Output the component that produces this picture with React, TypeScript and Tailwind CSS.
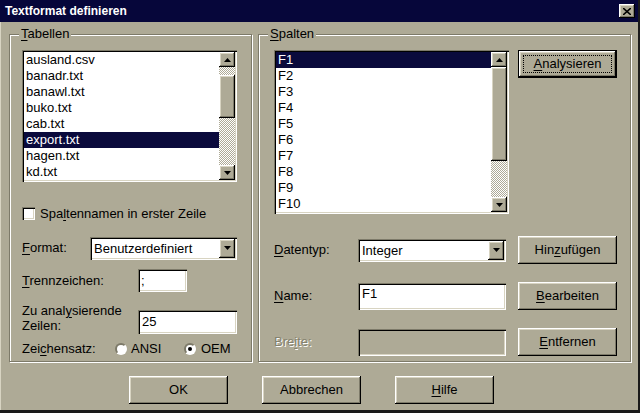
import React from "react";

const RAISED =
  "shadow-[inset_-1px_-1px_0_#000,inset_1px_1px_0_#fff,inset_-2px_-2px_0_#7d7a69,inset_2px_2px_0_#d8d4c2]";
const SUNKEN =
  "shadow-[inset_1px_1px_0_#7d7a69,inset_2px_2px_0_#000,inset_-1px_-1px_0_#fff,inset_-2px_-2px_0_#d8d4c2]";
const DITHER =
  "bg-[image:repeating-conic-gradient(#fff_0_25%,#aeaa96_0_50%)] bg-[length:2px_2px]";

const U = ({ children }: { children: React.ReactNode }) => <span className="underline underline-offset-2">{children}</span>;

const Arrow = ({ up }: { up?: boolean }) => (
  <svg width="7" height="4" viewBox="0 0 7 4">
    <polygon points={up ? "3.5,0 7,4 0,4" : "0,0 7,0 3.5,4"} fill="#000" />
  </svg>
);

const ArrowBtn = ({ up, className = "" }: { up?: boolean; className?: string }) => (
  <div className={`flex items-center justify-center bg-[#aeaa96] ${RAISED} ${className}`}>
    <Arrow up={up} />
  </div>
);

function Button({ children, isDefault }: { children: React.ReactNode; isDefault?: boolean }) {
  if (isDefault) {
    return (
      <div className="w-[99px] h-[28px] border border-black">
        <div className={`w-full h-full flex items-center justify-center p-[4px] ${RAISED}`}>
          <div className="w-full h-full flex items-center justify-center border border-dotted border-black">
            {children}
          </div>
        </div>
      </div>
    );
  }
  return (
    <div className={`w-[99px] h-[28px] flex items-center justify-center ${RAISED}`}>{children}</div>
  );
}

function Group({ label, className, children }: { label: React.ReactNode; className: string; children: React.ReactNode }) {
  return (
    <div className={`relative border border-[#7d7a69] shadow-[inset_1px_1px_0_#fff,1px_1px_0_#fff] ${className}`}>
      <span className="absolute -top-[9px] left-[9px] bg-[#aeaa96] px-[2px] leading-[15px]">{label}</span>
      {children}
    </div>
  );
}

function Combo({ value, w }: { value: string; w: string }) {
  return (
    <div className={`${w} h-[23px] bg-white p-[2px] flex ${SUNKEN}`}>
      <span className="flex-1 pl-[2px] leading-[19px]">{value}</span>
      <ArrowBtn className="w-[16px]" />
    </div>
  );
}

const tables = ["ausland.csv", "banadr.txt", "banawl.txt", "buko.txt", "cab.txt", "export.txt", "hagen.txt", "kd.txt"];
const fields = ["F1", "F2", "F3", "F4", "F5", "F6", "F7", "F8", "F9", "F10"];

export default function App() {
  return (
    <div className="w-[640px] h-[413px] bg-[#aeaa96] text-black text-[13px] font-['Liberation_Sans',Arial,sans-serif] border-r-2 border-b-[3px] border-[#1a1a1a] shadow-[inset_1px_1px_0_#d8d4c2] overflow-hidden">
      {/* title bar */}
      <div className="h-[22px] bg-[#06063a] flex items-center pl-[5px] pr-[3px]">
        <span className="text-white font-bold text-[12px] flex-1">Textformat definieren</span>
        <div className={`w-[16px] h-[14px] flex items-center justify-center bg-[#aeaa96] ${RAISED}`}>
          <svg width="8" height="7" viewBox="0 0 8 7">
            <path d="M0 0L8 7M8 0L0 7" stroke="#000" strokeWidth="1.6" />
          </svg>
        </div>
      </div>

      <div className="flex pl-[9px] mt-[12px]">
        {/* Tabellen */}
        <Group label={<><U>T</U>abellen</>} className="w-[243px] h-[328px]">
          <div className="flex flex-col pl-[12px] pt-[15px]">
            <div className={`w-[215px] h-[132px] bg-white p-[2px] flex ${SUNKEN}`}>
              <div className="flex-1">
                {tables.map((t) => (
                  <div
                    key={t}
                    className={`h-[16px] leading-[16px] pl-[2px] ${t === "export.txt" ? "bg-[#0a0a3c] text-white" : ""}`}
                  >
                    {t}
                  </div>
                ))}
              </div>
              <div className="w-[16px] flex flex-col">
                <ArrowBtn up className="h-[15px]" />
                <div className={`h-[8px] ${DITHER}`} />
                <div className={`h-[43px] bg-[#aeaa96] ${RAISED}`} />
                <div className={`flex-1 ${DITHER}`} />
                <ArrowBtn className="h-[15px]" />
              </div>
            </div>

            <div className="mt-[25px] h-[13px] flex items-center">
              <div className={`w-[13px] h-[13px] bg-white ${SUNKEN}`} />
              <span className="ml-[5px]">
                Spa<U>l</U>tennamen in erster Zeile
              </span>
            </div>

            <div className="mt-[17px] h-[22px] flex items-center">
              <span className="w-[68px]">
                <U>F</U>ormat:
              </span>
              <Combo value="Benutzerdefiniert" w="w-[147px]" />
            </div>

            <div className="mt-[10px] h-[23px] flex items-center">
              <span className="w-[116px]">
                <U>T</U>rennzeichen:
              </span>
              <div className={`w-[49px] h-[23px] bg-white pl-[3px] leading-[23px] ${SUNKEN}`}>;</div>
            </div>

            <div className="mt-[11px] flex items-start">
              <span className="w-[116px] leading-[15px]">
                Zu anal<U>y</U>sierende
                <br />
                Zeilen:
              </span>
              <div className={`mt-[7px] w-[99px] h-[24px] bg-white pl-[4px] leading-[24px] ${SUNKEN}`}>25</div>
            </div>

            <div className="mt-[7px] h-[16px] flex items-center">
              <span className="w-[93px]">
                Zei<U>c</U>hensatz:
              </span>
              <div className="w-[69px] flex items-center">
                <div className="w-[12px] h-[12px] rounded-full bg-white border-2 border-t-[#7d7a69] border-l-[#7d7a69] border-r-white border-b-white" />
                <span className="ml-[4px]">ANSI</span>
              </div>
              <div className="flex items-center">
                <div className="w-[12px] h-[12px] rounded-full bg-white border-2 border-t-[#7d7a69] border-l-[#7d7a69] border-r-white border-b-white flex items-center justify-center">
                  <div className="w-[4px] h-[4px] rounded-full bg-black" />
                </div>
                <span className="ml-[5px]">OEM</span>
              </div>
            </div>
          </div>
        </Group>

        {/* Spalten */}
        <Group label={<><U>S</U>palten</>} className="ml-[6px] w-[373px] h-[328px]">
          <div className="flex flex-col pl-[15px] pt-[15px]">
            <div className="flex items-start">
              <div className={`w-[235px] h-[164px] bg-white p-[2px] flex ${SUNKEN}`}>
                <div className="flex-1">
                  {fields.map((f) => (
                    <div
                      key={f}
                      className={`h-[16px] leading-[16px] pl-[2px] ${f === "F1" ? "bg-[#0a0a3c] text-white" : ""}`}
                    >
                      {f}
                    </div>
                  ))}
                </div>
                <div className="w-[16px] flex flex-col">
                  <ArrowBtn up className="h-[15px]" />
                  <div className={`h-[94px] bg-[#aeaa96] ${RAISED}`} />
                  <div className={`flex-1 ${DITHER}`} />
                  <ArrowBtn className="h-[15px]" />
                </div>
              </div>
              <div className="ml-[9px]">
                <Button isDefault>
                  <span>
                    <U>A</U>nalysieren
                  </span>
                </Button>
              </div>
            </div>

            <div className="mt-[22px] h-[28px] flex items-center">
              <span className="w-[84px]">
                <U>D</U>atentyp:
              </span>
              <Combo value="Integer" w="w-[148px]" />
              <div className="ml-[12px]">
                <Button>
                  <span>
                    Hin<U>z</U>ufügen
                  </span>
                </Button>
              </div>
            </div>

            <div className="mt-[18px] h-[28px] flex items-center">
              <span className="w-[84px]">
                <U>N</U>ame:
              </span>
              <div className={`w-[148px] h-[27px] bg-white pl-[4px] pt-[3px] leading-[16px] ${SUNKEN}`}>F1</div>
              <div className="ml-[12px]">
                <Button>
                  <span>
                    <U>B</U>earbeiten
                  </span>
                </Button>
              </div>
            </div>

            <div className="mt-[18px] h-[28px] flex items-center">
              <span className="w-[84px] text-[#85826f] [text-shadow:1px_1px_0_#fff]">
                Bre<U>i</U>te:
              </span>
              <div className={`w-[148px] h-[27px] bg-[#aeaa96] ${SUNKEN}`} />
              <div className="ml-[12px]">
                <Button>
                  <span>
                    <U>E</U>ntfernen
                  </span>
                </Button>
              </div>
            </div>
          </div>
        </Group>
      </div>

      <div className="mt-[14px] pl-[129px] flex gap-[34px]">
        <Button>OK</Button>
        <Button>Abbrechen</Button>
        <Button>
          <span>
            <U>H</U>ilfe
          </span>
        </Button>
      </div>
    </div>
  );
}
